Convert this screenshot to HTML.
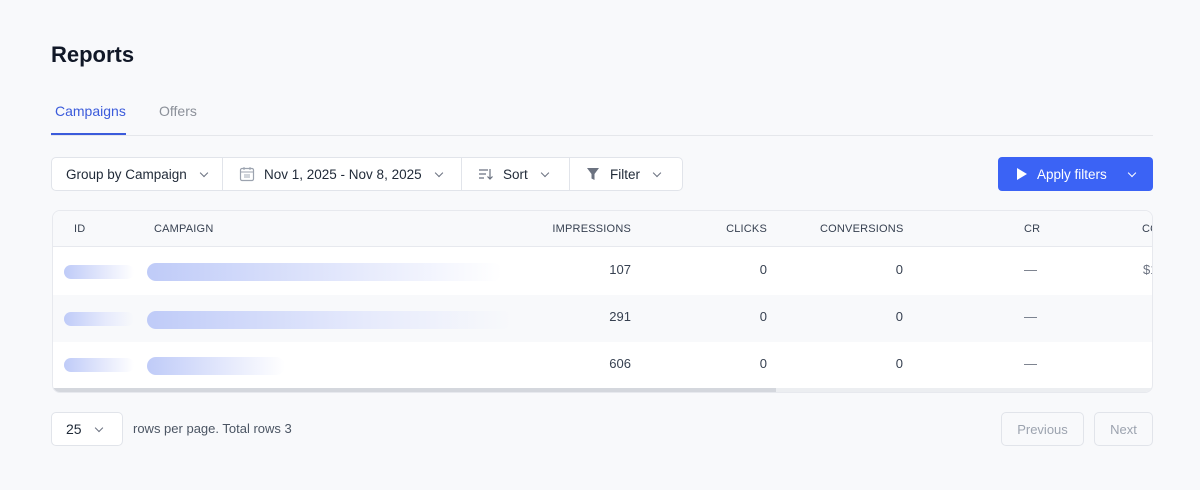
<!DOCTYPE html><html><head><style>
*{box-sizing:border-box;margin:0;padding:0}
body{width:1200px;height:490px;background:#f8f9fb;font-family:"Liberation Sans",sans-serif;position:relative;overflow:hidden;color:#1f2937}
.a{position:absolute}
h1{position:absolute;left:51px;top:42px;font-size:22px;font-weight:700;color:#111827}
.tab{font-size:14px}
.tb{position:absolute;left:51px;top:157px;width:632px;height:34px;background:#fff;border:1px solid #e1e4ea;border-radius:5px;display:flex}
.tb div{display:flex;align-items:center;font-size:13.5px;color:#1f2937;border-right:1px solid #e1e4ea;padding-left:14px}
.tb div:last-child{border-right:0}
.chev{width:6px;height:6px;border-right:1.2px solid #6b7280;border-bottom:1.2px solid #6b7280;transform:rotate(45deg);display:inline-block;margin-top:-3px}
.card{position:absolute;left:52px;top:210px;width:1101px;height:183px;background:#fff;border:1px solid #e7e9ee;border-radius:8px;overflow:hidden}
.hd{position:absolute;left:0;top:0;width:100%;height:36px;background:#f8f9fb;border-bottom:1px solid #e7e9ee}
.th{position:absolute;top:12px;font-size:11px;color:#374151;letter-spacing:.2px}
.td{position:absolute;font-size:13px;color:#374151}
.sk{position:absolute;height:14px;border-radius:7px;background:linear-gradient(90deg,#bfcbf8,#e6eafc 60%,rgba(255,255,255,0))}
.btn{position:absolute;top:412px;height:34px;border:1px solid #e1e4ea;border-radius:5px;font-size:13px;color:#9ca3af;display:flex;align-items:center;justify-content:center;background:#f8f9fb}
</style></head><body>
<h1>Reports</h1>
<div class="a tab" style="left:55px;top:103px;color:#3b5bdb">Campaigns</div>
<div class="a tab" style="left:159px;top:103px;color:#8b9099">Offers</div>
<div class="a" style="left:51px;top:135px;width:1102px;height:1px;background:#e5e7eb"></div>
<div class="a" style="left:51px;top:133px;width:75px;height:2px;background:#3b5bdb"></div>
<div class="tb">
<div style="width:171px">Group by Campaign<span class="chev" style="margin-left:14px"></span></div>
<div style="width:239px;padding-left:16px"><svg width="16" height="16" viewBox="0 0 16 16" style="margin-right:9px"><rect x="1.5" y="2.5" width="13" height="12" rx="1.5" fill="none" stroke="#9ca3af" stroke-width="1.2"/><line x1="1.5" y1="6" x2="14.5" y2="6" stroke="#9ca3af"/><line x1="5" y1="1" x2="5" y2="4" stroke="#9ca3af"/><line x1="11" y1="1" x2="11" y2="4" stroke="#9ca3af"/><rect x="5" y="8" width="6" height="4" fill="#d1d5db"/></svg>Nov 1, 2025 - Nov 8, 2025<span class="chev" style="margin-left:14px"></span></div>
<div style="width:108px;padding-left:16px"><svg width="16" height="16" viewBox="0 0 16 16" style="margin-right:9px"><path d="M1 4h9M1 8h7M1 12h5M12 3v10M9.5 10.5L12 13l2.5-2.5" fill="none" stroke="#6b7280" stroke-width="1.2"/></svg>Sort<span class="chev" style="margin-left:14px"></span></div>
<div style="width:112px;padding-left:16px"><svg width="14" height="14" viewBox="0 0 14 14" style="margin-right:10px"><path d="M1 1h12L8.5 7v6l-3-1.5V7z" fill="#6b7280"/></svg>Filter<span class="chev" style="margin-left:14px"></span></div>
</div>
<div class="a" style="left:998px;top:157px;width:155px;height:34px;background:#3b63f5;border-radius:4px;color:#fff;font-size:13.5px;display:flex;align-items:center">
<svg width="12" height="12" viewBox="0 0 12 12" style="margin-left:18px;margin-right:9px"><path d="M1 0L11 6L1 12z" fill="#fff"/></svg>Apply filters
<span class="chev" style="margin-left:22px;border-color:#fff"></span></div>
<div class="card">
<div class="hd"></div>
<div class="th" style="left:21px">ID</div>
<div class="th" style="left:101px">CAMPAIGN</div>
<div class="th" style="left:490px;width:88px;text-align:right">IMPRESSIONS</div>
<div class="th" style="left:600px;width:114px;text-align:right">CLICKS</div>
<div class="th" style="left:767px">CONVERSIONS</div>
<div class="th" style="left:971px">CR</div>
<div class="th" style="left:1089px">CO</div>
<div class="a" style="left:0;top:84px;width:100%;height:47px;background:#f8f9fb"></div>
<div class="sk" style="left:11px;top:54px;width:70px"></div><div class="sk" style="left:94px;top:52px;height:18px;border-radius:9px;width:355px"></div>
<div class="sk" style="left:11px;top:101px;width:70px"></div><div class="sk" style="left:94px;top:100px;height:18px;border-radius:9px;width:365px"></div>
<div class="sk" style="left:11px;top:147px;width:70px"></div><div class="sk" style="left:94px;top:146px;height:18px;border-radius:9px;width:138px"></div>
<div class="td" style="left:500px;width:78px;text-align:right;top:51px">107</div>
<div class="td" style="left:500px;width:78px;text-align:right;top:98px">291</div>
<div class="td" style="left:500px;width:78px;text-align:right;top:145px">606</div>
<div class="td" style="left:600px;width:114px;text-align:right;top:51px">0</div>
<div class="td" style="left:600px;width:114px;text-align:right;top:98px">0</div>
<div class="td" style="left:600px;width:114px;text-align:right;top:145px">0</div>
<div class="td" style="left:750px;width:100px;text-align:right;top:51px">0</div>
<div class="td" style="left:750px;width:100px;text-align:right;top:98px">0</div>
<div class="td" style="left:750px;width:100px;text-align:right;top:145px">0</div>
<div class="td" style="left:971px;top:51px;color:#6b7280">—</div>
<div class="td" style="left:971px;top:98px;color:#6b7280">—</div>
<div class="td" style="left:971px;top:145px;color:#6b7280">—</div>
<div class="td" style="left:1090px;top:51px;color:#6b7280">$1</div>
<div class="a" style="left:0;top:177px;width:100%;height:6px;background:#eceef1"></div>
<div class="a" style="left:0;top:177px;width:723px;height:6px;background:#d4d7dd"></div>
</div>
<div class="a" style="left:51px;top:412px;width:72px;height:34px;background:#fff;border:1px solid #e1e4ea;border-radius:5px;font-size:14px;display:flex;align-items:center;padding-left:14px;color:#1f2937">25<span class="chev" style="margin-left:14px"></span></div>
<div class="a" style="left:133px;top:421px;font-size:13px;color:#4b5563">rows per page. Total rows 3</div>
<div class="btn" style="left:1001px;width:83px">Previous</div>
<div class="btn" style="left:1094px;width:59px">Next</div>
</body></html>
